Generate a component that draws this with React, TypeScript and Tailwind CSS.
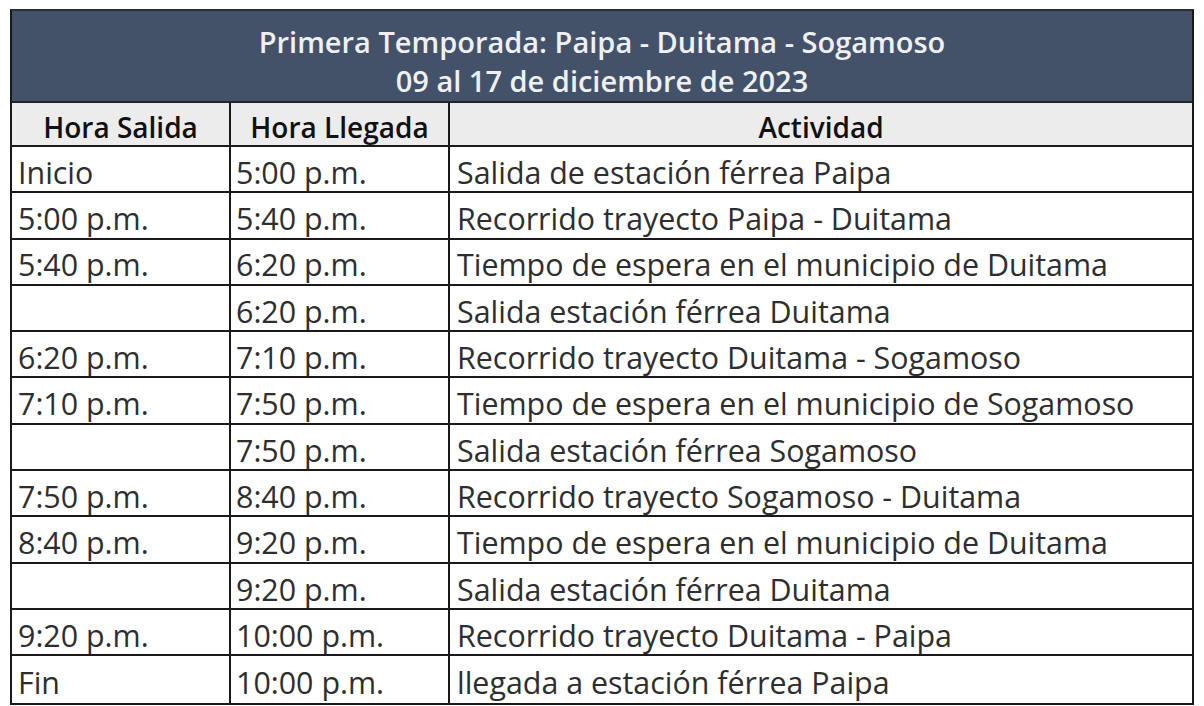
import React from "react";

const rows: [string, string, string][] = [
  ["Inicio", "5:00 p.m.", "Salida de estación férrea Paipa"],
  ["5:00 p.m.", "5:40 p.m.", "Recorrido trayecto Paipa - Duitama"],
  ["5:40 p.m.", "6:20 p.m.", "Tiempo de espera en el municipio de Duitama"],
  ["", "6:20 p.m.", "Salida estación férrea Duitama"],
  ["6:20 p.m.", "7:10 p.m.", "Recorrido trayecto Duitama - Sogamoso"],
  ["7:10 p.m.", "7:50 p.m.", "Tiempo de espera en el municipio de Sogamoso"],
  ["", "7:50 p.m.", "Salida estación férrea Sogamoso"],
  ["7:50 p.m.", "8:40 p.m.", "Recorrido trayecto Sogamoso - Duitama"],
  ["8:40 p.m.", "9:20 p.m.", "Tiempo de espera en el municipio de Duitama"],
  ["", "9:20 p.m.", "Salida estación férrea Duitama"],
  ["9:20 p.m.", "10:00 p.m.", "Recorrido trayecto Duitama - Paipa"],
  ["Fin", "10:00 p.m.", "llegada a estación férrea Paipa"],
];

export default function App() {
  return (
    <div className="w-[1204px] h-[706px] bg-white pt-[9px] pl-[10px] font-['Open_Sans','Liberation_Sans',sans-serif]">
      <div className="w-[1184px] border-2 border-[#1a1a1a] border-t-[#2a2f38]">
        <div className="h-[92px] bg-[#435269] flex flex-col items-center justify-center pt-[10px] text-[#eef0f3] font-semibold text-[29px] leading-[39px] border-b-2 border-[#1f2530]">
          <div>Primera Temporada: Paipa - Duitama - Sogamoso</div>
          <div>09 al 17 de diciembre de 2023</div>
        </div>
        <div className="flex h-[44px] bg-[#ececec] border-b-2 border-[#1a1a1a] font-semibold text-[28px] text-[#111]">
          <div className="w-[219px] border-r-2 border-[#1a1a1a] flex items-center justify-center pt-[5px]">Hora Salida</div>
          <div className="w-[219px] border-r-2 border-[#1a1a1a] flex items-center justify-center pt-[5px]">Hora Llegada</div>
          <div className="flex-1 flex items-center justify-center pt-[5px]">Actividad</div>
        </div>
        {rows.map((r, i) => (
          <div
            key={i}
            className={`flex h-[46.3px] text-[30.4px] text-[#2e2e2e] ${i < rows.length - 1 ? "border-b-2 border-[#1a1a1a]" : ""}`}
          >
            <div className="w-[219px] border-r-2 border-[#1a1a1a] flex items-center pl-[6px] pt-[7px]">{r[0]}</div>
            <div className="w-[219px] border-r-2 border-[#1a1a1a] flex items-center pl-[5px] pt-[7px]">{r[1]}</div>
            <div className="flex-1 flex items-center pl-[7px] pt-[7px]">{r[2]}</div>
          </div>
        ))}
      </div>
    </div>
  );
}
